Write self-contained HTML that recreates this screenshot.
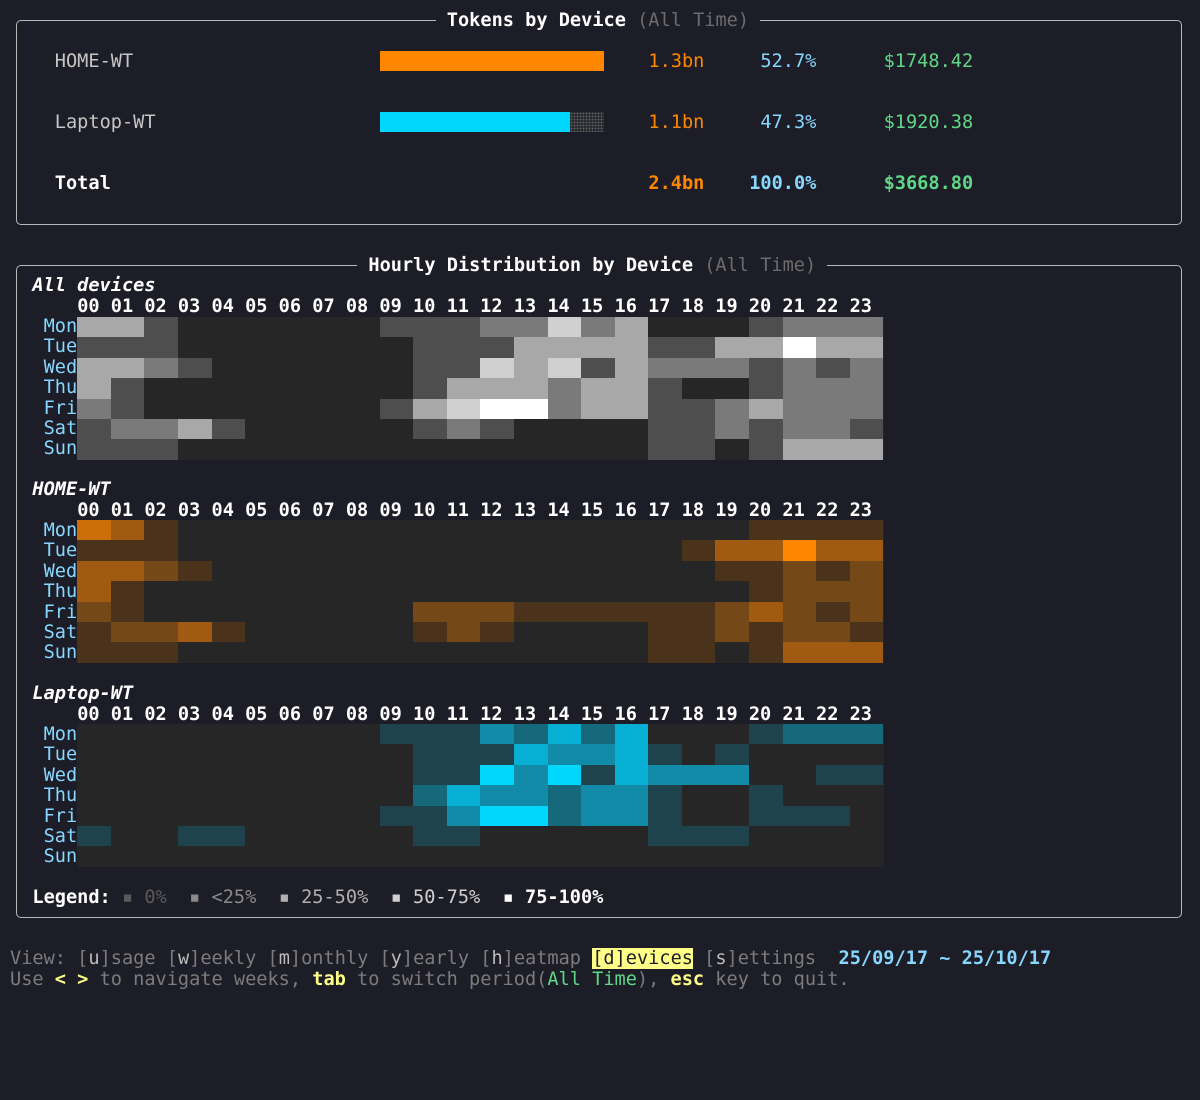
<!DOCTYPE html>
<html><head><meta charset="utf-8"><style>
body{margin:0;width:1200px;height:1100px;background:#1c1d27;overflow:hidden;font-family:"DejaVu Sans Mono","Liberation Mono",monospace;font-size:18.6px;color:#c6c6c6}
.t{position:absolute;white-space:pre;line-height:20.4px;height:20.4px;margin-top:1px}
.box{position:absolute;border:1px solid #b8b8b8;border-radius:5px}
.b{font-weight:bold}
.w{color:#fff}.dim{color:#6c6c6c}.or{color:#ff8700}.cy{color:#87d7ff}.gr{color:#5fd787}.day{color:#87d7ff}
.ttl{background:#1c1d27}
.grid{position:absolute;left:77.2px;width:806.4px;background:#262626}
.grid div{display:flex;height:20.4px}
.grid i{display:block;width:33.6px;height:20.4px;flex:none}
.g .l1{background:#4e4e4e}.g .l2{background:#7a7a7a}.g .l3{background:#a8a8a8}.g .l4{background:#d0d0d0}.g .l5{background:#fff}
.o .l1{background:#4b331b}.o .l2{background:#744817}.o .l3{background:#a05a11}.o .l4{background:#cc6e0a}.o .l5{background:#ff8700}
.c .l1{background:#1f434c}.c .l2{background:#16697a}.c .l3{background:#118ba8}.c .l4{background:#08afd5}.c .l5{background:#00d7ff}
.ft{color:#7c7c7c}.k{color:#bcbcbc}.y{color:#ffff87;font-weight:bold}
</style></head><body>
<div class="box" style="left:15.6px;top:20.2px;width:1164px;height:203px"></div>
<div class="t ttl" style="left:435.6px;top:10px"> <span class="b w">Tokens by Device</span><span class="dim"> (All Time)</span> </div>
<div class="t" style="left:54.8px;top:50.8px">HOME-WT</div>
<div style="position:absolute;left:379.6px;top:51px;width:224px;height:20px;background:#ff8700"></div>
<div class="t or" style="left:648.4px;top:50.8px">1.3bn</div>
<div class="t cy" style="left:760.4px;top:50.8px">52.7%</div>
<div class="t gr" style="left:883.6px;top:50.8px">$1748.42</div>
<div class="t" style="left:54.8px;top:112px">Laptop-WT</div>
<div style="position:absolute;left:379.6px;top:112px;width:190px;height:20px;background:#00d7ff"></div>
<div style="position:absolute;left:569.6px;top:112px;width:34px;height:20px;background-color:#2a2a33;background-image:radial-gradient(circle,#666 0.7px,transparent 0.9px);background-size:3px 3px"></div>
<div class="t or" style="left:648.4px;top:112px">1.1bn</div>
<div class="t cy" style="left:760.4px;top:112px">47.3%</div>
<div class="t gr" style="left:883.6px;top:112px">$1920.38</div>
<div class="t b w" style="left:54.8px;top:173.2px">Total</div>
<div class="t b or" style="left:648.4px;top:173.2px">2.4bn</div>
<div class="t b cy" style="left:749.2px;top:173.2px">100.0%</div>
<div class="t b gr" style="left:883.6px;top:173.2px">$3668.80</div>

<div class="box" style="left:15.6px;top:265px;width:1164px;height:651px"></div>
<div class="t ttl" style="left:357.2px;top:254.8px"> <span class="b w">Hourly Distribution by Device</span><span class="dim"> (All Time)</span> </div>

<div class="t b w" style="left:32.4px;top:275.2px;font-style:italic">All devices</div>
<div class="t b w" style="left:77.2px;top:295.6px">00 01 02 03 04 05 06 07 08 09 10 11 12 13 14 15 16 17 18 19 20 21 22 23</div>
<div class="t day" style="left:43.6px;top:316px;line-height:20.4px;height:auto">Mon
Tue
Wed
Thu
Fri
Sat
Sun</div>
<div class="grid g" style="top:317px">
<div><i class=l3></i><i class=l3></i><i class=l1></i><i></i><i></i><i></i><i></i><i></i><i></i><i class=l1></i><i class=l1></i><i class=l1></i><i class=l2></i><i class=l2></i><i class=l4></i><i class=l2></i><i class=l3></i><i></i><i></i><i></i><i class=l1></i><i class=l2></i><i class=l2></i><i class=l2></i></div>
<div><i class=l1></i><i class=l1></i><i class=l1></i><i></i><i></i><i></i><i></i><i></i><i></i><i></i><i class=l1></i><i class=l1></i><i class=l1></i><i class=l3></i><i class=l3></i><i class=l3></i><i class=l3></i><i class=l1></i><i class=l1></i><i class=l3></i><i class=l3></i><i class=l5></i><i class=l3></i><i class=l3></i></div>
<div><i class=l3></i><i class=l3></i><i class=l2></i><i class=l1></i><i></i><i></i><i></i><i></i><i></i><i></i><i class=l1></i><i class=l1></i><i class=l4></i><i class=l3></i><i class=l4></i><i class=l1></i><i class=l3></i><i class=l2></i><i class=l2></i><i class=l2></i><i class=l1></i><i class=l2></i><i class=l1></i><i class=l2></i></div>
<div><i class=l3></i><i class=l1></i><i></i><i></i><i></i><i></i><i></i><i></i><i></i><i></i><i class=l1></i><i class=l3></i><i class=l3></i><i class=l3></i><i class=l2></i><i class=l3></i><i class=l3></i><i class=l1></i><i></i><i></i><i class=l1></i><i class=l2></i><i class=l2></i><i class=l2></i></div>
<div><i class=l2></i><i class=l1></i><i></i><i></i><i></i><i></i><i></i><i></i><i></i><i class=l1></i><i class=l3></i><i class=l4></i><i class=l5></i><i class=l5></i><i class=l2></i><i class=l3></i><i class=l3></i><i class=l1></i><i class=l1></i><i class=l2></i><i class=l3></i><i class=l2></i><i class=l2></i><i class=l2></i></div>
<div><i class=l1></i><i class=l2></i><i class=l2></i><i class=l3></i><i class=l1></i><i></i><i></i><i></i><i></i><i></i><i class=l1></i><i class=l2></i><i class=l1></i><i></i><i></i><i></i><i></i><i class=l1></i><i class=l1></i><i class=l2></i><i class=l1></i><i class=l2></i><i class=l2></i><i class=l1></i></div>
<div><i class=l1></i><i class=l1></i><i class=l1></i><i></i><i></i><i></i><i></i><i></i><i></i><i></i><i></i><i></i><i></i><i></i><i></i><i></i><i></i><i class=l1></i><i class=l1></i><i></i><i class=l1></i><i class=l3></i><i class=l3></i><i class=l3></i></div>
</div>

<div class="t b w" style="left:32.4px;top:479.2px;font-style:italic">HOME-WT</div>
<div class="t b w" style="left:77.2px;top:499.6px">00 01 02 03 04 05 06 07 08 09 10 11 12 13 14 15 16 17 18 19 20 21 22 23</div>
<div class="t day" style="left:43.6px;top:520px;height:auto">Mon
Tue
Wed
Thu
Fri
Sat
Sun</div>
<div class="grid o" style="top:520px">
<div><i class=l4></i><i class=l3></i><i class=l1></i><i></i><i></i><i></i><i></i><i></i><i></i><i></i><i></i><i></i><i></i><i></i><i></i><i></i><i></i><i></i><i></i><i></i><i class=l1></i><i class=l1></i><i class=l1></i><i class=l1></i></div>
<div><i class=l1></i><i class=l1></i><i class=l1></i><i></i><i></i><i></i><i></i><i></i><i></i><i></i><i></i><i></i><i></i><i></i><i></i><i></i><i></i><i></i><i class=l1></i><i class=l3></i><i class=l3></i><i class=l5></i><i class=l3></i><i class=l3></i></div>
<div><i class=l3></i><i class=l3></i><i class=l2></i><i class=l1></i><i></i><i></i><i></i><i></i><i></i><i></i><i></i><i></i><i></i><i></i><i></i><i></i><i></i><i></i><i></i><i class=l1></i><i class=l1></i><i class=l2></i><i class=l1></i><i class=l2></i></div>
<div><i class=l3></i><i class=l1></i><i></i><i></i><i></i><i></i><i></i><i></i><i></i><i></i><i></i><i></i><i></i><i></i><i></i><i></i><i></i><i></i><i></i><i></i><i class=l1></i><i class=l2></i><i class=l2></i><i class=l2></i></div>
<div><i class=l2></i><i class=l1></i><i></i><i></i><i></i><i></i><i></i><i></i><i></i><i></i><i class=l2></i><i class=l2></i><i class=l2></i><i class=l1></i><i class=l1></i><i class=l1></i><i class=l1></i><i class=l1></i><i class=l1></i><i class=l2></i><i class=l3></i><i class=l2></i><i class=l1></i><i class=l2></i></div>
<div><i class=l1></i><i class=l2></i><i class=l2></i><i class=l3></i><i class=l1></i><i></i><i></i><i></i><i></i><i></i><i class=l1></i><i class=l2></i><i class=l1></i><i></i><i></i><i></i><i></i><i class=l1></i><i class=l1></i><i class=l2></i><i class=l1></i><i class=l2></i><i class=l2></i><i class=l1></i></div>
<div><i class=l1></i><i class=l1></i><i class=l1></i><i></i><i></i><i></i><i></i><i></i><i></i><i></i><i></i><i></i><i></i><i></i><i></i><i></i><i></i><i class=l1></i><i class=l1></i><i></i><i class=l1></i><i class=l3></i><i class=l3></i><i class=l3></i></div>
</div>

<div class="t b w" style="left:32.4px;top:683.2px;font-style:italic">Laptop-WT</div>
<div class="t b w" style="left:77.2px;top:703.6px">00 01 02 03 04 05 06 07 08 09 10 11 12 13 14 15 16 17 18 19 20 21 22 23</div>
<div class="t day" style="left:43.6px;top:724px;height:auto">Mon
Tue
Wed
Thu
Fri
Sat
Sun</div>
<div class="grid c" style="top:724px">
<div><i></i><i></i><i></i><i></i><i></i><i></i><i></i><i></i><i></i><i class=l1></i><i class=l1></i><i class=l1></i><i class=l3></i><i class=l2></i><i class=l4></i><i class=l2></i><i class=l4></i><i></i><i></i><i></i><i class=l1></i><i class=l2></i><i class=l2></i><i class=l2></i></div>
<div><i></i><i></i><i></i><i></i><i></i><i></i><i></i><i></i><i></i><i></i><i class=l1></i><i class=l1></i><i class=l1></i><i class=l4></i><i class=l3></i><i class=l3></i><i class=l4></i><i class=l1></i><i></i><i class=l1></i><i></i><i></i><i></i><i></i></div>
<div><i></i><i></i><i></i><i></i><i></i><i></i><i></i><i></i><i></i><i></i><i class=l1></i><i class=l1></i><i class=l5></i><i class=l3></i><i class=l5></i><i class=l1></i><i class=l4></i><i class=l3></i><i class=l3></i><i class=l3></i><i></i><i></i><i class=l1></i><i class=l1></i></div>
<div><i></i><i></i><i></i><i></i><i></i><i></i><i></i><i></i><i></i><i></i><i class=l2></i><i class=l4></i><i class=l3></i><i class=l3></i><i class=l2></i><i class=l3></i><i class=l3></i><i class=l1></i><i></i><i></i><i class=l1></i><i></i><i></i><i></i></div>
<div><i></i><i></i><i></i><i></i><i></i><i></i><i></i><i></i><i></i><i class=l1></i><i class=l1></i><i class=l3></i><i class=l5></i><i class=l5></i><i class=l2></i><i class=l3></i><i class=l3></i><i class=l1></i><i></i><i></i><i class=l1></i><i class=l1></i><i class=l1></i><i></i></div>
<div><i class=l1></i><i></i><i></i><i class=l1></i><i class=l1></i><i></i><i></i><i></i><i></i><i></i><i class=l1></i><i class=l1></i><i></i><i></i><i></i><i></i><i></i><i class=l1></i><i class=l1></i><i class=l1></i><i></i><i></i><i></i><i></i></div>
<div></div>
</div>

<div class="t" style="left:32.4px;top:887.2px"><span class="b w">Legend:</span> <span style="color:#5a5a5a">▪ 0%</span>  <span style="color:#8a8a8a">▪ &lt;25%</span>  <span style="color:#b0b0b0">▪ 25-50%</span>  <span style="color:#d0d0d0">▪ 50-75%</span>  <span class="b w">▪ 75-100%</span></div>

<div class="t ft" style="left:10px;top:948.4px">View: [<span class="k">u</span>]sage [<span class="k">w</span>]eekly [<span class="k">m</span>]onthly [<span class="k">y</span>]early [<span class="k">h</span>]eatmap <span style="background:#ffff87;color:#1c1d27">[d]evices</span> [<span class="k">s</span>]ettings  <span class="b cy">25/09/17 ~ 25/10/17</span></div>
<div class="t ft" style="left:10px;top:968.8px">Use <span class="y">&lt; &gt;</span> to navigate weeks, <span class="y">tab</span> to switch period(<span class="gr">All Time</span>), <span class="y">esc</span> key to quit.</div>
</body></html>
